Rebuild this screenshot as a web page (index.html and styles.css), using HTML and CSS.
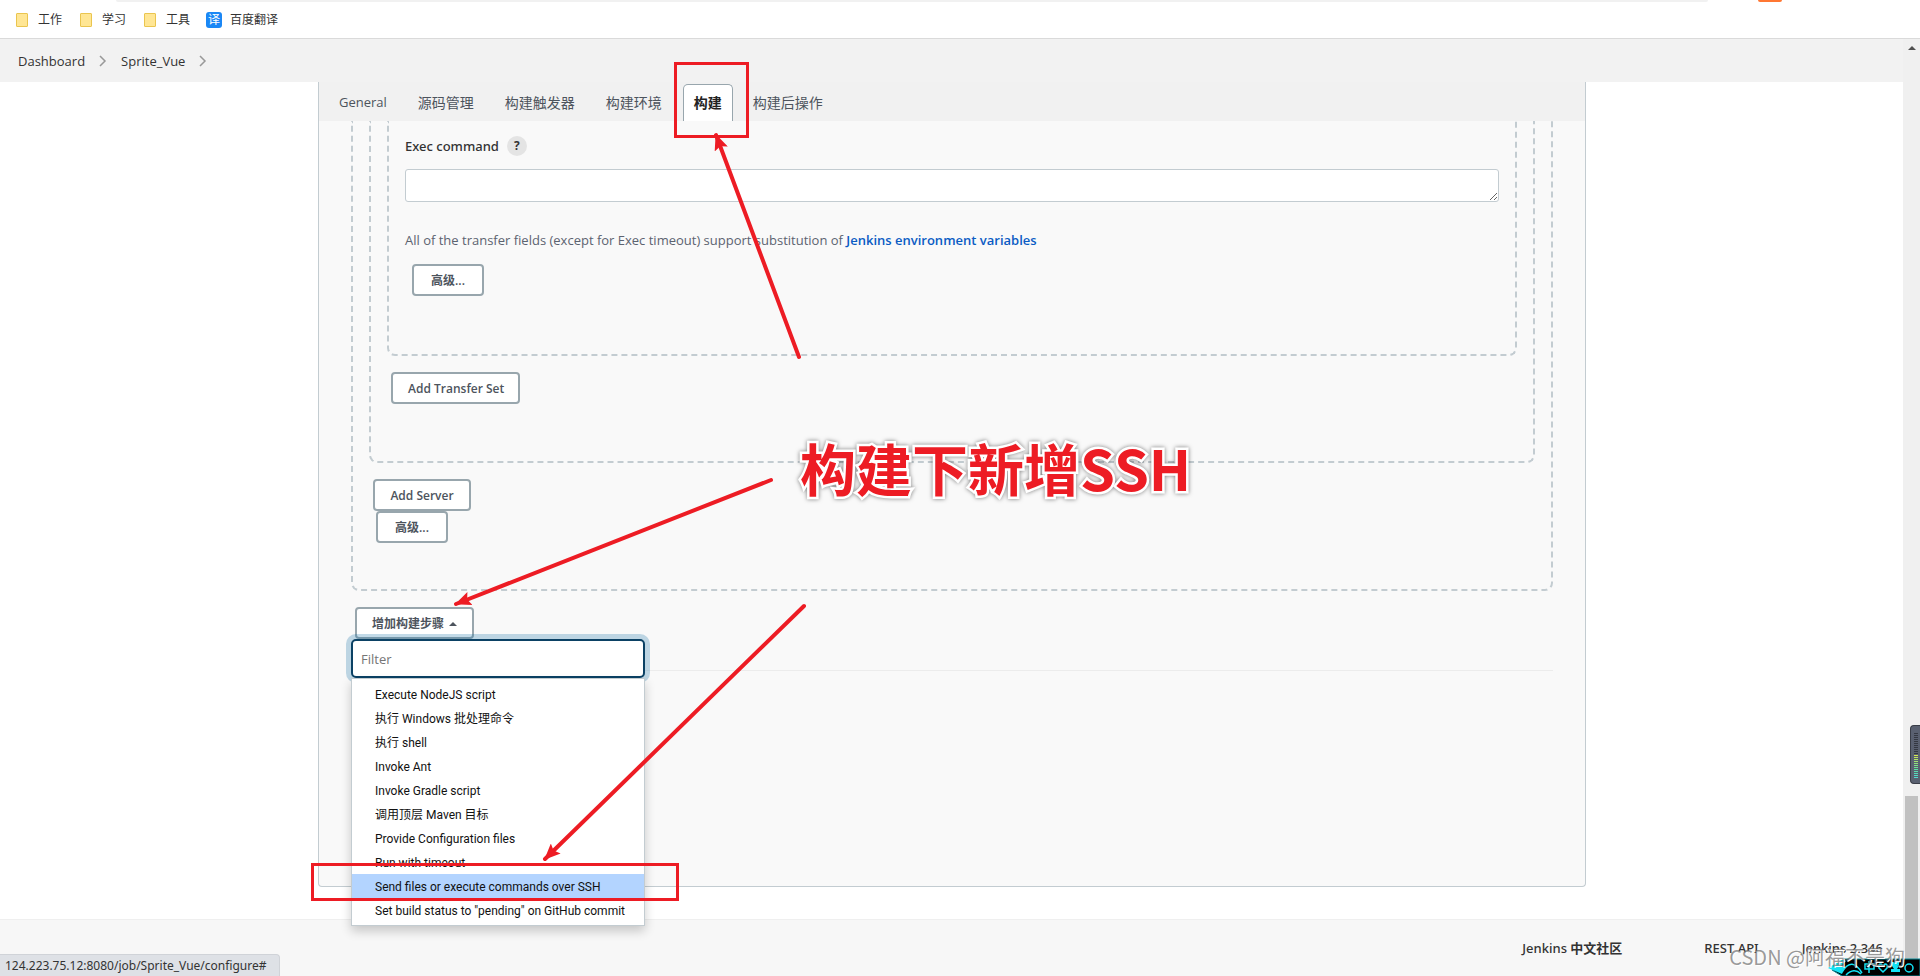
FILE: index.html
```
<!DOCTYPE html>
<html lang="zh-CN">
<head>
	<meta charset="utf-8">
	<title>Sprite_Vue Config [Jenkins]</title>
	<link rel="stylesheet" href="styles.css">
</head>
<body>
	<header class="bookmarks">
		<div class="address-edge"></div>
		<div class="extension-edge"></div>
		<a href="#"><span class="folder"></span>工作</a>
		<a href="#"><span class="folder"></span>学习</a>
		<a href="#"><span class="folder"></span>工具</a>
		<a class="translate" href="#"><span class="translate-icon">译</span>百度翻译</a>
	</header>

	<div class="window">
		<div class="page">
			<nav class="breadcrumbs">
				<a href="#">Dashboard</a>
				<svg class="chevron" viewBox="0 0 8 12"><path d="M1 1l5 5-5 5"/></svg>
				<a href="#">Sprite_Vue</a>
				<svg class="chevron" viewBox="0 0 8 12"><path d="M1 1l5 5-5 5"/></svg>
			</nav>

			<main class="panel">
				<nav class="tabs">
					<a class="tab general" href="#">General</a>
					<a class="tab" href="#">源码管理</a>
					<a class="tab" href="#">构建触发器</a>
					<a class="tab" href="#">构建环境</a>
					<a class="tab active" href="#">构建</a>
					<a class="tab" href="#">构建后操作</a>
				</nav>
				<form class="config">
					<div class="chunk publishers">
						<div class="chunk server">
							<div class="chunk transfer">
								<div class="label-row">
									<label for="exec">Exec command</label>
									<button type="button" class="help">?</button>
								</div>
								<textarea id="exec" rows="1"></textarea>
								<p class="note">All of the transfer fields (except for Exec timeout) support substitution of <a href="#">Jenkins environment variables</a></p>
								<button type="button" class="btn advanced">高级...</button>
							</div>
							<button type="button" class="btn add-set">Add Transfer Set</button>
						</div>
						<button type="button" class="btn add-server">Add Server</button>
						<button type="button" class="btn more">高级...</button>
					</div>
					<div class="add-step">
						<button type="button" class="btn">增加构建步骤 <span class="caret"></span></button>
						<div class="dropdown">
							<input class="filter" type="text" placeholder="Filter" aria-label="Filter">
							<ul class="menu">
								<li><a href="#">Execute NodeJS script</a></li>
								<li><a href="#">执行 Windows 批处理命令</a></li>
								<li><a href="#">执行 shell</a></li>
								<li><a href="#">Invoke Ant</a></li>
								<li><a href="#">Invoke Gradle script</a></li>
								<li><a href="#">调用顶层 Maven 目标</a></li>
								<li><a href="#">Provide Configuration files</a></li>
								<li><a href="#">Run with timeout</a></li>
								<li><a class="selected" href="#">Send files or execute commands over SSH</a></li>
								<li><a href="#">Set build status to "pending" on GitHub commit</a></li>
							</ul>
						</div>
					</div>
					<hr>
				</form>
			</main>

			<footer class="footer">
				<a class="community" href="#">Jenkins <b>中文社区</b></a>
				<a class="api" href="#">REST API</a>
				<a href="#">Jenkins 2.346</a>
			</footer>
		</div>
		<aside class="scrollbar">
			<span class="scroll-up"></span>
			<span class="thumb"></span>
		</aside>
	</div>

	<div class="status">124.223.75.12:8080/job/Sprite_Vue/configure#</div>

	<div class="mark mark-tab"></div>
	<div class="mark mark-item"></div>
	<svg class="arrows" width="1920" height="976" viewBox="0 0 1920 976">
		<defs>
			<marker id="head" viewBox="0 0 16 14" refX="15" refY="7" markerWidth="16" markerHeight="14" markerUnits="userSpaceOnUse" orient="auto">
				<path d="M16 7L0 0l3 7-3 7z"/>
			</marker>
		</defs>
		<path class="shaft" d="M799 357L716 135"/>
		<path class="shaft" d="M771 480L456 604"/>
		<path class="shaft" d="M804 606L545 859"/>
	</svg>
	<div class="caption">构建下新增SSH</div>

	<div class="watermark">CSDN @阿福不是狗</div>
	<svg class="ime" viewBox="0 0 92 18">
		<path class="ime-body" d="M16 1h76v17H14L4 12z"/>
		<path class="ime-fish" d="M0 10L15 1l3 2-5 5 4 1-3 7z"/>
		<path class="ime-line" d="M14 14q10-16 20 1M18 17q8-8 15-1"/>
		<path class="ime-line" d="M37 6h9v5h-9zM41 3v12"/>
		<path class="ime-line" d="M55 14l-4-4q-1-4 2-4l2 2 2-2q3 0 2 4z"/>
		<path class="ime-fish" d="M64 4h7v4l-2 3h3v3h-9v-3h3l-2-3z"/>
		<circle class="ime-line" cx="81" cy="10" r="4"/>
	</svg>
	<div class="meter"><span class="meter-off"></span><span class="meter-on"></span></div>
</body>
</html>
```
FILE: styles.css
```
* {
	box-sizing: border-box;
}

body {
	position: relative;
	display: flex;
	flex-direction: column;
	min-height: 100vh;
	margin: 0;
	overflow: hidden;
	background: #fff;
	color: #333;
	font-family: "Open Sans", "Noto Sans CJK SC", sans-serif;
	font-size: 13px;
	line-height: 20px;
}

a {
	color: inherit;
	text-decoration: none;
}

/* browser bar */
.bookmarks {
	position: relative;
	display: flex;
	align-items: center;
	gap: 18px;
	height: 39px;
	padding: 2px 16px 0;
	border-bottom: 1px solid #dadada;
	font-size: 12px;
}

.bookmarks a {
	display: flex;
	align-items: center;
	gap: 10px;
}

.bookmarks .translate {
	gap: 8px;
	margin-left: -2px;
}

.folder {
	width: 12px;
	height: 14px;
	border: 1px solid #eac54f;
	border-radius: 1px;
	background: #ffe694;
}

.translate-icon {
	width: 16px;
	height: 16px;
	border-radius: 3px;
	background: #1a87f5;
	color: #fff;
	line-height: 16px;
	text-align: center;
}

.address-edge {
	position: absolute;
	top: 0;
	left: 116px;
	right: 212px;
	height: 2px;
	border-radius: 0 0 6px 6px;
	background: #f1f1f1;
}

.extension-edge {
	position: absolute;
	top: 0;
	right: 138px;
	width: 24px;
	height: 2px;
	border-radius: 0 0 2px 2px;
	background: #ff7733;
}

.window {
	display: flex;
	flex: 1;
}

.page {
	display: flex;
	flex: 1;
	flex-direction: column;
}

.breadcrumbs {
	display: flex;
	align-items: center;
	gap: 14px;
	height: 43px;
	padding: 0 18px;
	background: #f2f2f2;
	font-weight: 500;
}

.chevron {
	width: 8px;
	height: 12px;
	fill: none;
	stroke: #999;
	stroke-width: 1.5;
}

/* config panel */
.panel {
	margin: 0 317px 32px 318px;
	border: 1px solid #c3ccd1;
	border-top: 0;
	border-radius: 0 0 4px 4px;
	background: #f9f9f9;
}

.tabs {
	display: flex;
	align-items: flex-end;
	height: 39px;
	padding-left: 5px;
	background: #f1f1f1;
}

.tab {
	height: 37px;
	padding: 0 16px 0 15px;
	color: #4d545d;
	font-size: 14px;
	line-height: 37px;
}

.tab.general {
	font-size: 13px;
}

.tab.active {
	margin: 0 5px;
	padding: 0 10px;
	border: 1px solid #98a6ad;
	border-bottom: 0;
	border-radius: 5px 5px 0 0;
	background: #fff;
	color: #222;
	font-weight: bold;
	line-height: 35px;
}

.config {
	padding: 0 32px 215px;
}

.chunk {
	border: 2px dashed #c3ccd1;
	border-top: 0;
	border-radius: 0 0 8px 8px;
	padding: 0 16px;
}

.transfer {
	padding: 15px 16px 58px;
}

.server {
	padding-bottom: 57px;
}

.publishers {
	padding-bottom: 46px;
}

.label-row {
	display: flex;
	align-items: center;
	gap: 8px;
	height: 20px;
	font-family: "Noto Sans", sans-serif;
	font-weight: 500;
}

.help {
	width: 20px;
	height: 20px;
	padding: 0;
	border: 0;
	border-radius: 50%;
	background: #e4e4e4;
	color: #333;
	font: bold 12px/20px "Open Sans", sans-serif;
}

textarea {
	display: block;
	width: 100%;
	height: 33px;
	margin-top: 13px;
	border: 1px solid #c3ccd1;
	border-radius: 3px;
	background: #fff;
	resize: vertical;
}

.note {
	margin: 28px 0 14px;
	color: #5c6370;
}

.note a {
	color: #0b5cc4;
	font-weight: 600;
}

.btn {
	display: block;
	height: 32px;
	padding: 1px 15px 0;
	border: 2px solid #98a6ad;
	border-radius: 4px;
	background: #fff;
	color: #4d545d;
	font-family: inherit;
	font-size: 12px;
	font-weight: 600;
	line-height: 27px;
	white-space: nowrap;
}

.advanced {
	width: 72px;
	margin-left: 7px;
}

.add-set {
	width: 129px;
	margin: 16px 0 0 4px;
}

.add-server {
	width: 98px;
	margin: 16px 0 0 4px;
}

.more {
	width: 72px;
	margin-left: 7px;
}

.add-step {
	position: relative;
	margin-top: 16px;
	padding-left: 4px;
}

.caret {
	display: inline-block;
	margin-left: 2px;
	border: 4px solid transparent;
	border-top: 0;
	border-bottom-color: #4d545d;
	vertical-align: 2px;
}

.dropdown {
	position: absolute;
	z-index: 1;
	top: 32px;
	left: 0;
	width: 294px;
}

.filter {
	display: block;
	width: 100%;
	height: 39px;
	padding: 0 8px;
	border: 2px solid #0b4164;
	border-radius: 5px;
	outline: 0;
	box-shadow: 0 0 0 5px rgba(11, 106, 162, 0.25);
	font-family: inherit;
	font-size: 13px;
}

.filter::placeholder {
	color: #757575;
}

.menu {
	position: relative;
	margin: 0;
	padding: 3px 0;
	border: 1px solid #c3ccd1;
	background: #fff;
	box-shadow: 0 5px 10px rgba(0, 0, 0, 0.2);
	list-style: none;
}

.menu a {
	display: block;
	height: 24px;
	padding-left: 23px;
	color: #111;
	font-family: Roboto, "Noto Sans CJK SC", sans-serif;
	font-size: 12px;
	line-height: 26px;
	white-space: nowrap;
}

.menu .selected {
	background: #b3d4ff;
}

hr {
	height: 1px;
	margin: 31px 0 0;
	border: 0;
	background: #ececec;
}

.footer {
	display: flex;
	flex: 1;
	justify-content: flex-end;
	padding: 18px 20px 0;
	border-top: 1px solid #efefef;
	background: #f7f7f7;
	font-family: "Noto Sans", "Noto Sans CJK SC", sans-serif;
	font-weight: 500;
}

.community {
	margin-right: 82px;
}

.api {
	margin-right: 43px;
}

/* scrollbar */
.scrollbar {
	display: flex;
	flex-direction: column;
	align-items: center;
	justify-content: space-between;
	width: 17px;
	padding: 7px 0 17px;
	background: #f0f0f0;
}

.scroll-up {
	border: 4px solid transparent;
	border-top: 0;
	border-bottom-color: #505050;
}

.thumb {
	width: 13px;
	height: 163px;
	background: #c1c1c1;
}

.status {
	position: absolute;
	bottom: 0;
	left: 0;
	height: 22px;
	padding: 0 12px 0 5px;
	border: 1px solid #d0d3d8;
	border-width: 1px 1px 0 0;
	border-radius: 0 4px 0 0;
	background: #dee1e6;
	font-family: "Noto Sans", sans-serif;
	font-size: 12px;
	line-height: 21px;
}

/* red notes over the page */
.mark {
	position: absolute;
	z-index: 2;
	border: 3px solid #ed1c24;
}

.mark-tab {
	top: 62px;
	left: 674px;
	width: 75px;
	height: 76px;
}

.mark-item {
	top: 863px;
	left: 311px;
	width: 368px;
	height: 38px;
}

.arrows {
	position: absolute;
	z-index: 2;
	top: 0;
	left: 0;
	fill: #ed1c24;
	pointer-events: none;
}

.shaft {
	stroke: #ed1c24;
	stroke-width: 4;
	stroke-linecap: round;
	marker-end: url(#head);
}

.caption {
	position: absolute;
	z-index: 3;
	top: 427px;
	left: 800px;
	color: #ed1c24;
	font: bold 56px/80px "Noto Sans CJK SC", sans-serif;
	-webkit-text-stroke: 5px #fff;
	paint-order: stroke fill;
	filter: drop-shadow(0 0 2px rgba(0, 0, 0, 0.5));
	white-space: nowrap;
}

.watermark {
	position: absolute;
	z-index: 4;
	right: 15px;
	bottom: 4px;
	color: rgba(110, 110, 110, 0.7);
	font: 20px/30px "Noto Sans CJK SC", sans-serif;
	text-shadow: 1px 1px 0 #fff;
}

.ime {
	position: absolute;
	z-index: 3;
	right: 0;
	bottom: 0;
	width: 92px;
	height: 18px;
}

.ime-body {
	fill: #000;
	stroke: #088a98;
}

.ime-fish {
	fill: #12e2f5;
}

.ime-line {
	fill: none;
	stroke: #12e2f5;
	stroke-width: 1.5;
}

.meter {
	position: absolute;
	top: 725px;
	right: 0;
	display: flex;
	flex-direction: column;
	width: 10px;
	height: 59px;
	padding: 7px 2px 0 3px;
	border: 1px solid #393d47;
	border-right: 0;
	border-radius: 4px 0 0 4px;
	background: #596070;
}

.meter-off {
	height: 22px;
	background: repeating-linear-gradient(#343842 0 1px, transparent 1px 2px);
}

.meter-on {
	height: 24px;
	background: repeating-linear-gradient(transparent 0 1px, #596070 1px 2px), linear-gradient(#d8e84a, #5be0a0 60%, #4fd8d8);
}
```
